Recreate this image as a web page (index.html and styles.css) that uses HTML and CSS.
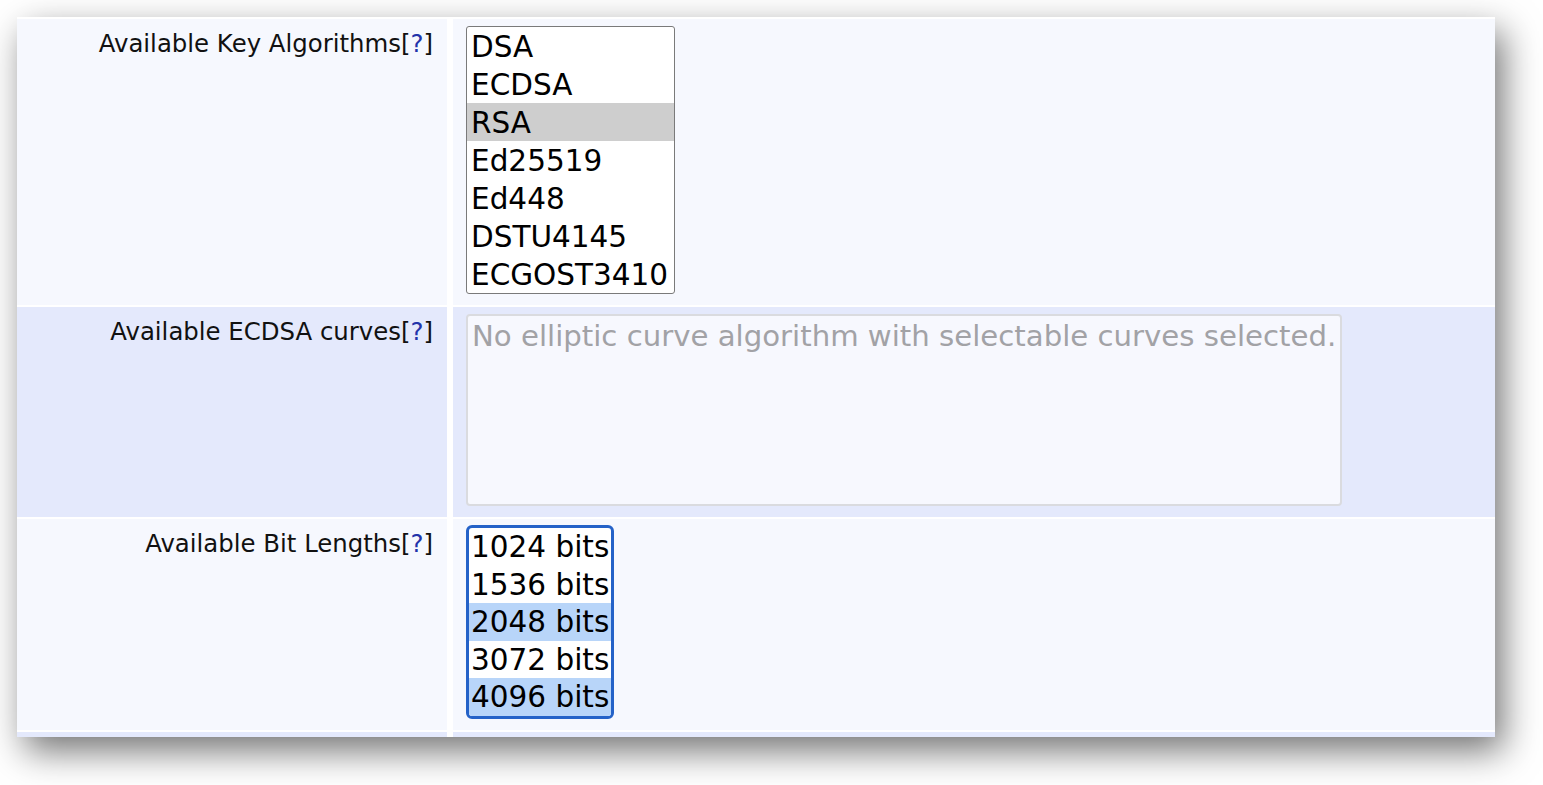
FILE: index.html
```html
<!DOCTYPE html>
<html lang="en">
<head>
<meta charset="utf-8">
<title>Key algorithms</title>
<link rel="stylesheet" href="styles.css">
</head>
<body>
<div class="panel">
  <div class="row light">
    <div class="label">Available Key Algorithms[<a class="help" href="#">?</a>]</div>
    <div class="field">
      <div class="listbox algos" role="listbox">
        <div class="opt">DSA</div>
        <div class="opt">ECDSA</div>
        <div class="opt sel-gray">RSA</div>
        <div class="opt">Ed25519</div>
        <div class="opt">Ed448</div>
        <div class="opt">DSTU4145</div>
        <div class="opt">ECGOST3410</div>
      </div>
    </div>
  </div>
  <div class="row dark">
    <div class="label">Available ECDSA curves[<a class="help" href="#">?</a>]</div>
    <div class="field">
      <div class="emptybox">No elliptic curve algorithm with selectable curves selected.</div>
    </div>
  </div>
  <div class="row light">
    <div class="label">Available Bit Lengths[<a class="help" href="#">?</a>]</div>
    <div class="field field-bits">
      <div class="listbox bits" role="listbox">
        <div class="opt">1024 bits</div>
        <div class="opt">1536 bits</div>
        <div class="opt sel-blue">2048 bits</div>
        <div class="opt">3072 bits</div>
        <div class="opt sel-blue">4096 bits</div>
      </div>
    </div>
  </div>
  <div class="row dark tail">
    <div class="label"></div>
    <div class="field"></div>
  </div>
</div>
</body>
</html>
```

FILE: styles.css
```css
html {
  margin: 0;
  padding: 0;
  background: #ffffff;
  min-height: 100%;
  height: 100%;
}

body {
  margin: 0;
  padding: 17px;
  min-height: 100%;
  box-sizing: border-box;
  background: #ffffff;
  font-family: "DejaVu Sans", Verdana, sans-serif;
  color: #000;
}

.panel {
  width: 1478px;
  background: #ffffff;
  padding-top: 2px;
  display: flex;
  flex-direction: column;
  gap: 2px;
  box-shadow: 8px 14px 34px rgba(0, 0, 0, 0.55);
}

.row {
  display: grid;
  grid-template-columns: 430px 1fr;
  column-gap: 6px;
}

.row.light > div { background: #f6f8fe; }
.row.dark > div { background: #e4e9fc; }

.label {
  text-align: right;
  font-size: 24.4px;
  padding: 11px 14px 0 0;
  line-height: 28px;
  color: #111;
}

.help {
  color: #2233aa;
  text-decoration: none;
}

.field {
  padding: 7px 0 11px 13px;
}

.field-bits {
  padding-top: 6px;
}

.tail > div {
  height: 5px;
  padding: 0;
}

.listbox {
  background: #ffffff;
  font-size: 29.5px;
  box-sizing: border-box;
}

.opt {
  height: 38px;
  line-height: 40px;
  padding-left: 4px;
  white-space: nowrap;
}

.algos {
  width: 209px;
  border: 1px solid #7a7a7a;
  border-radius: 3px;
}

.sel-gray { background: #cecece; }

.bits {
  width: 148px;
  border: 3px solid #2462c8;
  border-radius: 6px;
  overflow: hidden;
}

.bits .opt {
  height: 37.6px;
  line-height: 39.6px;
  padding-left: 2px;
}

.sel-blue { background: #b8d5f9; }

.emptybox {
  width: 876px;
  height: 192px;
  box-sizing: border-box;
  border: 2px solid #dadbdf;
  border-radius: 4px;
  background: #f7f8fe;
  color: #a2a2a6;
  font-size: 29.2px;
  line-height: 38px;
  padding: 1px 4px;
  white-space: nowrap;
}
```
